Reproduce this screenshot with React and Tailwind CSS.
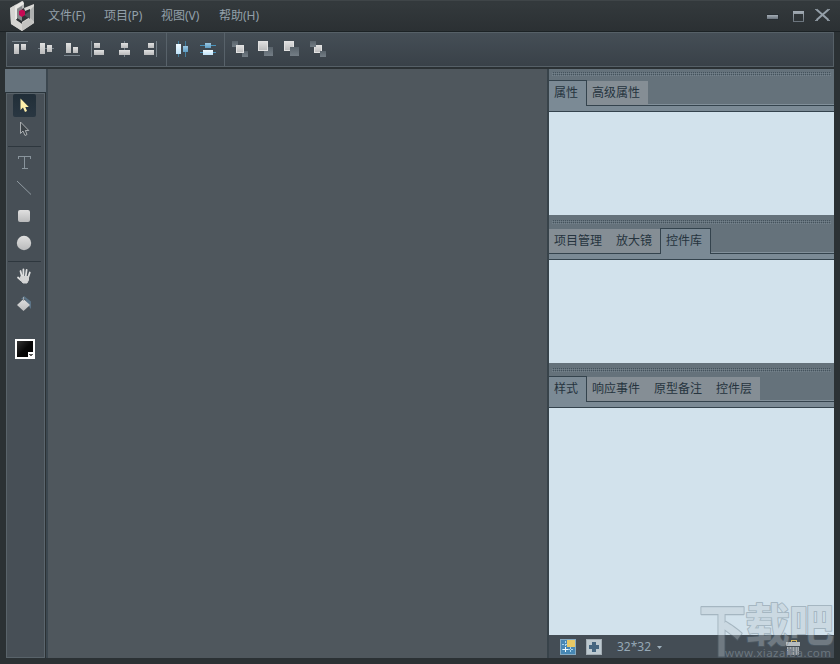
import React from "react";

const FONT = "font-['Noto_Sans','Noto_Sans_CJK_SC',sans-serif]";

function Defs() {
  return (
    <svg className="absolute h-0 w-0" aria-hidden="true">
      <defs>
        <linearGradient id="silver" x1="0" y1="0" x2="0" y2="1">
          <stop offset="0" stopColor="#e0e0e0" />
          <stop offset="1" stopColor="#b9babb" />
        </linearGradient>
        <linearGradient id="steel" x1="0" y1="0" x2="0" y2="1">
          <stop offset="0" stopColor="#59636b" />
          <stop offset="1" stopColor="#747e86" />
        </linearGradient>
        <linearGradient id="blue" x1="0" y1="0" x2="0" y2="1">
          <stop offset="0" stopColor="#9cc7e2" />
          <stop offset="1" stopColor="#5e9dc4" />
        </linearGradient>
        <linearGradient id="ice" x1="0" y1="0" x2="0" y2="1">
          <stop offset="0" stopColor="#f1faff" />
          <stop offset="1" stopColor="#bfe2f8" />
        </linearGradient>
        <linearGradient id="win" x1="0" y1="0" x2="0" y2="1">
          <stop offset="0" stopColor="#a4adb5" />
          <stop offset="1" stopColor="#69727b" />
        </linearGradient>
        <linearGradient id="gloss" x1="0" y1="0" x2="1" y2="1">
          <stop offset="0" stopColor="#333" />
          <stop offset="0.5" stopColor="#080808" />
          <stop offset="1" stopColor="#000" />
        </linearGradient>
      </defs>
    </svg>
  );
}

function Tool({ children }) {
  return (
    <svg width="26" height="26" viewBox="0 0 26 26" className="shrink-0" shapeRendering="crispEdges">
      {children}
    </svg>
  );
}

const S = "url(#silver)";

function Logo() {
  return (
    <svg width="26" height="31" viewBox="9 0 26 31" className="shrink-0">
      <path d="M10 8L22 1L24 3V8L16 12V20L22 24V31L11 24Z" fill="#b8b9b9" />
      <path d="M10 8L16 4.5V20L22 24V31L11 24Z" fill="#d6d5d2" />
      <path d="M16 5L23 1L24 4L17 8.5V19L15 20V7Z" fill="#e9e8e5" />
      <path d="M17 9L22 6V21L17 18Z" fill="#85888a" />
      <path d="M24 8L34 4V23L22 31V22L30 17V9L25 11Z" fill="#d9d8d5" />
      <path d="M22 23L30 18L34 23L22 31Z" fill="#c3c3c1" />
      <path d="M24 15L30 11V19Z" fill="#4c5358" />
      <path d="M30 10L34 6V22L30 18Z" fill="#aeb0b0" />
      <path d="M19 11L22 9.5L25 11V15L22 17L19 15Z" fill="#c60a54" />
    </svg>
  );
}

function TitleBar() {
  return (
    <header className="flex h-8 shrink-0 items-center border-t border-b border-t-[#3f4548] border-b-[#1c2225] bg-linear-to-b from-[#33393c] from-10% to-[#2b3033] pr-2 pl-[9px]">
      <div className="-mt-0.5 flex"><Logo /></div>
      <nav className="ml-[13px] flex gap-[18px] text-[12px] leading-4 text-[#93a0aa]">
        <span className="w-[38px] whitespace-nowrap">文件(F)</span>
        <span className="w-[39px] whitespace-nowrap">项目(P)</span>
        <span className="w-[40px] whitespace-nowrap">视图(V)</span>
        <span className="whitespace-nowrap">帮助(H)</span>
      </nav>
      <svg width="66" height="16" viewBox="766 8 66 16" className="ml-auto shrink-0" shapeRendering="crispEdges">
        <rect x="766.5" y="14" width="12" height="6" fill="#272d32" />
        <rect x="767" y="15" width="11" height="4" fill="url(#win)" />
        <path fillRule="evenodd" d="M793 11H804V22H793ZM794 14V21H803V14Z" fill="url(#win)" />
        <path d="M816.5 9.5L828.5 20M828.5 9.5L816.5 20" stroke="#949fa8" strokeWidth="2" shapeRendering="auto" />
        <path d="M815 9.5H818M827 9.5H830M815 20.5H818M827 20.5H830" stroke="#858f98" />
      </svg>
    </header>
  );
}

function Divider() {
  return <div className="mr-0.5 ml-[3px] h-[34px] w-px bg-[#58626a]" />;
}

function Toolbar() {
  return (
    <div className="mr-[6px] ml-[6px] flex h-[35px] shrink-0 items-center border border-[#566067] bg-linear-to-b from-[#454e56] to-[#394148] pb-0.5">
      <Tool>
        <path d="M5 5.5H21" stroke="#77828a" />
        <rect x="7" y="8" width="5" height="10" fill={S} /><rect x="14" y="8" width="5" height="6" fill={S} />
      </Tool>
      <Tool>
        <path d="M5 12.5H21" stroke="#77828a" />
        <rect x="7" y="7" width="5" height="11" fill={S} /><rect x="14" y="9" width="5" height="7" fill={S} />
      </Tool>
      <Tool>
        <path d="M5 19.5H21" stroke="#77828a" />
        <rect x="7" y="7" width="5" height="10" fill={S} /><rect x="14" y="11" width="5" height="6" fill={S} />
      </Tool>
      <Tool>
        <path d="M6.5 5V21" stroke="#77828a" />
        <rect x="9" y="7" width="6" height="5" fill={S} /><rect x="9" y="14" width="10" height="5" fill={S} />
      </Tool>
      <Tool>
        <path d="M13.5 5V21" stroke="#77828a" />
        <rect x="10" y="7" width="7" height="5" fill={S} /><rect x="8" y="14" width="11" height="5" fill={S} />
      </Tool>
      <Tool>
        <path d="M19.5 5V21" stroke="#77828a" />
        <rect x="11" y="7" width="6" height="5" fill={S} /><rect x="7" y="14" width="10" height="5" fill={S} />
      </Tool>
      <Divider />
      <Tool>
        <rect x="9" y="5" width="1" height="16" fill="#437f9f" /><rect x="16" y="5" width="1" height="16" fill="#437f9f" />
        <rect x="7" y="8" width="5" height="10" fill="url(#ice)" /><rect x="14" y="10" width="5" height="6" fill="url(#blue)" />
      </Tool>
      <Tool>
        <rect x="5" y="9" width="16" height="1" fill="#4a93bb" /><rect x="5" y="16" width="16" height="1" fill="#4a93bb" />
        <rect x="10" y="7" width="6" height="5" fill="url(#blue)" /><rect x="8" y="14" width="10" height="5" fill="url(#ice)" />
      </Tool>
      <Divider />
      <Tool>
        <rect x="5" y="5" width="6" height="6" fill="url(#steel)" /><rect x="15" y="15" width="6" height="6" fill="url(#steel)" />
        <rect x="9.5" y="9.5" width="7" height="7" fill={S} stroke="#e1e1e1" />
      </Tool>
      <Tool>
        <rect x="11" y="11" width="9" height="9" fill="url(#steel)" />
        <rect x="5.5" y="5.5" width="9" height="9" fill={S} stroke="#e1e1e1" />
      </Tool>
      <Tool>
        <rect x="5.5" y="5.5" width="9" height="9" fill={S} stroke="#e1e1e1" />
        <rect x="11" y="11" width="9" height="9" fill="url(#steel)" />
      </Tool>
      <Tool>
        <rect x="9.5" y="9.5" width="7" height="7" fill={S} stroke="#e1e1e1" />
        <rect x="5" y="5" width="6" height="6" fill="url(#steel)" /><rect x="15" y="15" width="6" height="6" fill="url(#steel)" />
      </Tool>
    </div>
  );
}

const ARROW = "M0.5 0.5V12L3 9.5L5 14L7 13L5.3 9H8.8Z";

function ToolRule() {
  return <div className="ml-px h-px w-[33px] shrink-0 self-start bg-[#2e373e]" />;
}

function ToolPanel() {
  return (
    <aside className="flex w-[41px] shrink-0 flex-col">
      <div className="h-[24px] shrink-0 border-b border-[#29343b] bg-[#65727c]" />
      <div className="mr-px ml-px flex grow flex-col items-center border border-[#59636a] border-r-[#5b656d] bg-[#474f56] pr-[3px] pb-px">
        <div className="flex h-[23px] w-[23px] shrink-0 items-center justify-center rounded-[2px] bg-linear-to-b from-[#212e38] to-[#2a3742]">
          <svg width="9" height="15" viewBox="0 0 9 15"><path d={ARROW} fill="#ffefaa" /></svg>
        </div>
        <svg width="26" height="24" viewBox="0 0 26 24" className="shrink-0">
          <path d={ARROW} transform="translate(9 4.5)" fill="#3c4348" stroke="#b3b7b9" strokeWidth=".9" />
        </svg>
        <div className="h-[5px] shrink-0" />
        <ToolRule />
        <div className="h-0.5 shrink-0" />
        <Tool>
          <path d="M7.5 10V7.5H19.5V10M13.5 7.5V19.5M10.5 19.5H16.5" fill="none" stroke="#89949c" strokeWidth="1" />
        </Tool>
        <Tool><path d="M6 6L20 19.5" stroke="#919ba2" shapeRendering="auto" /></Tool>
        <div className="h-0.5 shrink-0" />
        <Tool><rect x="7" y="7" width="12" height="12" rx="2" fill={S} shapeRendering="auto" /></Tool>
        <div className="h-px shrink-0" />
        <Tool><circle cx="13" cy="13" r="7.2" fill={S} shapeRendering="auto" /></Tool>
        <div className="h-[5px] shrink-0" />
        <ToolRule />
        <div className="h-px shrink-0" />
        <Tool>
          <g fill="none" stroke="#dedfdf" strokeLinecap="round" strokeWidth="1.8" shapeRendering="auto">
            <path d="M7 14.5L9.8 17M9.5 8L11 14M12.4 6.5V13M15.6 7L14.8 13M18.8 9.5L17 15" />
            <path d="M10 13.5H17.5V17L16 20H12L9.5 17Z" fill="#d4d5d5" strokeWidth="1" stroke="#d4d5d5" />
          </g>
        </Tool>
        <div className="h-0.5 shrink-0" />
        <Tool>
          <g shapeRendering="auto">
            <path d="M10 8L13 5L20 10.5V18L17.5 15L14 8Z" fill="#5b7386" />
            <path d="M6 14L12.5 8L19 14L12.5 20Z" fill={S} />
            <path d="M12.5 6V10" stroke="#9fa6ac" />
          </g>
        </Tool>
        <svg width="22" height="20" viewBox="0 0 22 20" className="mt-[22px] ml-[2px] shrink-0" shapeRendering="crispEdges">
          <rect x="1" y="0" width="20" height="20" fill="#fff" />
          <rect x="3" y="2" width="16" height="16" fill="url(#gloss)" />
          <rect x="14" y="13" width="7" height="7" fill="#fff" />
          <path d="M15 15H19L17 18Z" fill="#5b5b5b" />
        </svg>
      </div>
    </aside>
  );
}

const DOTS =
  "bg-[conic-gradient(#44535d_25%,transparent_0_50%,#74828c_0_75%,transparent_0)] bg-[length:2px_2px]";

/* Each panel is a grip, a strip of tabs, a thin ledge and an empty body. */
function Panel({ tabs, active, bodyClass }) {
  return (
    <section className={"flex flex-col " + bodyClass}>
      <div className="flex h-[43px] shrink-0 flex-col bg-[#65727b]">
        <div className={"mt-[3px] mr-[3px] ml-[3px] h-[4px] shrink-0 " + DOTS} />
        <div className="mt-[4px] flex h-[26px] shrink-0 items-stretch">
          {tabs.map(([name, width], i) =>
            i === active ? (
              <div
                key={name}
                className={
                  width +
                  " z-10 flex shrink-0 border-t border-r border-[#34434d] bg-[#7b8a95] pt-[4px] pl-[5px] whitespace-nowrap text-[#26343e]" +
                  (i > 0 ? " border-l" : "")
                }
              >
                {name}
              </div>
            ) : (
              <div key={name} className={width + " flex shrink-0 flex-col border-b border-[#34434d] pt-px"}>
                <div className="flex grow bg-[#858e95] pt-[4px] pl-[5px] whitespace-nowrap text-[#26343e]">{name}</div>
              </div>
            ),
          )}
          <div className="flex grow flex-col justify-end border-b border-[#34434d]">
            <div className="h-px bg-[#82909a]" />
          </div>
        </div>
        <div className="grow border-b border-[#34434d] bg-[#7b8a95]" />
      </div>
      <div className="grow bg-[#d2e2ec]" />
    </section>
  );
}

function StatusBar() {
  return (
    <footer className="flex h-[23px] shrink-0 items-center bg-[#444d55] pt-px text-[12px] text-[#96a8b5]">
      <svg width="16" height="16" viewBox="0 0 16 16" className="ml-[11px]" shapeRendering="crispEdges">
        <rect width="16" height="16" fill="#4787b4" />
        <path d="M.5 0V16M0 15.5H16M0 .5H16M15.5 0V16" stroke="#86aac2" />
        <path d="M5.5 2V14M2 10.5H14M10.5 8V14M2 5.5H8" stroke="#a6d5ed" strokeDasharray="2 1" />
        <path d="M5.5 8V13M3 10.5H8" stroke="#effaff" />
        <rect x="7" y="1" width="8" height="7" fill="#e6c865" />
      </svg>
      <svg width="16" height="16" viewBox="0 0 16 16" className="ml-[10px]" shapeRendering="crispEdges">
        <rect x=".5" y=".5" width="15" height="15" fill="#bdc9d0" stroke="#a3adb4" />
        <path d="M6 3H10V6H13V10H10V13H6V10H3V6H6Z" fill="#466680" />
      </svg>
      <span className="ml-[15px] w-[34px] whitespace-nowrap leading-4">32*32</span>
      <svg width="5" height="3" viewBox="0 0 5 3" className="ml-[6px]"><path d="M0 0H5L2.5 3Z" fill="#9eb0bd" /></svg>
      <svg width="14" height="16" viewBox="0 0 14 16" className="ml-auto mr-[34px]" shapeRendering="crispEdges">
        <path d="M5 3V1H10V3" fill="none" stroke="#d7b95c" />
        <rect x="0" y="3" width="14" height="4" fill="#b7bdc1" />
        <path d="M1.5 8V16M4.5 8V16M7.5 8V16M10.5 8V16M12.5 8V16" stroke="#aab0b4" />
        <path d="M2 8H13V16H2Z" fill="#a1a8ad" opacity=".65" />
      </svg>
    </footer>
  );
}

function Watermark() {
  return (
    <div className="pointer-events-none absolute top-[574px] left-[690px] z-20 h-[90px] w-[150px]">
      <svg width="150" height="90" viewBox="690 574 150 90" className="font-['Noto_Sans_CJK_SC',sans-serif]">
        <g opacity=".36" fill="#bfcbd2" stroke="#586a76" strokeWidth="2" strokeLinejoin="round" fontWeight="700" paintOrder="stroke">
          <text transform="translate(699 651) scale(1 1.18)" x="0" y="0" fontSize="47">下</text>
          <text x="745" y="642" fontSize="45" textLength="89">载吧</text>
        </g>
        <text x="725" y="657" fontSize="11.5" textLength="106" fill="#6b767f" className="font-['Noto_Sans',sans-serif]">www.xiazaiba.com</text>
      </svg>
    </div>
  );
}

export default function App() {
  return (
    <div className={"relative flex h-[664px] w-[840px] flex-col overflow-hidden bg-[#2b3134] text-[12px] leading-4 " + FONT}>
      <Defs />
      <TitleBar />
      <Toolbar />
      <div className="mt-0.5 mr-[6px] ml-[5px] flex h-[589px] shrink-0">
        <ToolPanel />
        <main className="w-[503px] shrink-0 border-r-2 border-l-2 border-r-[#38434a] border-l-[#3c474f] bg-[#4f575d]" />
        <div className="flex w-[285px] flex-col">
          <Panel tabs={[["属性", "w-[38px]"], ["高级属性", "w-[61px]"]]} active={0} bodyClass="h-[146px]" />
          <div className="h-0.5 bg-[#65727b]" />
          <Panel
            tabs={[["项目管理", "w-[62px]"], ["放大镜", "w-[49px]"], ["控件库", "w-[51px]"]]}
            active={2}
            bodyClass="h-[146px]"
          />
          <div className="h-0.5 bg-[#65727b]" />
          <Panel
            tabs={[["样式", "w-[38px]"], ["响应事件", "w-[62px]"], ["原型备注", "w-[62px]"], ["控件层", "w-[49px]"]]}
            active={0}
            bodyClass="h-[270px]"
          />
          <StatusBar />
        </div>
      </div>
      <Watermark />
    </div>
  );
}
